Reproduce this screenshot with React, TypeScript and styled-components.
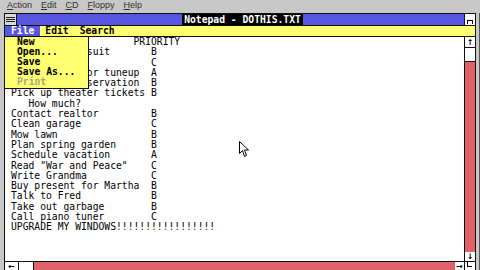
import styled, { createGlobalStyle } from 'styled-components'

const GlobalStyle = createGlobalStyle`
  html, body {
    margin: 0;
    padding: 0;
    background: #c8c8c8;
  }
`

const COLORS = {
  desk: '#c8c8c8',
  blue: '#5656e2',
  yellow: '#ffff72',
  red: '#e0616a',
  ink: '#101010',
}

const MONO = `'DejaVu Sans Mono', 'Liberation Mono', monospace`

const Screen = styled.div`
  position: relative;
  width: 480px;
  height: 270px;
  overflow: hidden;
  display: flex;
  flex-direction: column;
  background: ${COLORS.desk};
`

const DeskMenu = styled.div`
  display: flex;
  height: 13px;
  padding-left: 7px;
  gap: 9px;
  align-items: flex-start;
  font-family: 'Liberation Sans', Arial, sans-serif;
  font-size: 9px;
  line-height: 10px;
  color: #333;
`

const DeskItem = styled.span`
  & u {
    text-decoration: underline;
  }
`

const Frame = styled.div`
  flex: 1;
  display: flex;
  min-height: 0;
`

const Window = styled.div`
  position: relative;
  margin-left: 4px;
  width: 472px;
  display: flex;
  flex-direction: column;
  border-left: 1px solid ${COLORS.ink};
  border-top: 1px solid ${COLORS.ink};
  border-right: 1px solid ${COLORS.ink};
  background: #fff;
`

const RightEdge = styled.div`
  width: 3px;
  border-right: 1px solid #555;
`

const TitleBar = styled.div`
  height: 11px;
  display: flex;
  align-items: stretch;
  background: ${COLORS.blue};
  border-bottom: 1px solid ${COLORS.ink};
`

const SysBox = styled.div`
  width: 9px;
  background: #d8d8d8;
  border-right: 1px solid ${COLORS.ink};
  display: flex;
  flex-direction: column;
  justify-content: center;
  gap: 1px;
  padding: 0 1px;

  & span {
    height: 1px;
    background: #222;
  }
`

const TitleArea = styled.div`
  flex: 1;
  display: flex;
  justify-content: center;
  padding-left: 4px;
`

const TitleText = styled.div`
  background: #000;
  color: #fff;
  font-family: ${MONO};
  font-weight: bold;
  font-size: 9.7px;
  line-height: 11px;
  padding: 0 2px;
  white-space: pre;
`

const MaxBox = styled.div`
  width: 10px;
  background: #fff;
  border-left: 1px solid ${COLORS.ink};
  position: relative;

  &::after {
    content: '';
    position: absolute;
    left: 2px;
    bottom: 1px;
    width: 4px;
    height: 3px;
    border: 1px solid #000;
    border-bottom: none;
  }
`

const MenuBar = styled.div`
  position: relative;
  height: 10px;
  display: flex;
  align-items: stretch;
  background: ${COLORS.yellow};
  border-bottom: 1px solid ${COLORS.ink};
  font-family: ${MONO};
  font-size: 9.7px;
  line-height: 10px;
  z-index: 2;
`

const MenuItem = styled.div<{ $active?: boolean }>`
  padding: 0 6px;
  margin-right: -1px;
  background: ${(p) => (p.$active ? COLORS.blue : 'transparent')};
  color: ${(p) => (p.$active ? '#fff' : '#000')};
  font-weight: bold;
`

// the open File menu lies over the first lines of the document
const Dropdown = styled.div`
  position: absolute;
  left: 0;
  top: 11px;
  width: 83px;
  padding: 0 0 1px;
  background: ${COLORS.yellow};
  border-right: 1px solid ${COLORS.ink};
  border-bottom: 1px solid ${COLORS.ink};
`

const DropItem = styled.div<{ $disabled?: boolean }>`
  padding-left: 12px;
  height: 10px;
  line-height: 10px;
  font-weight: bold;
  white-space: pre;
  color: ${(p) => (p.$disabled ? '#a8a880' : '#000')};
`

const Body = styled.div`
  flex: 1;
  display: flex;
  min-height: 0;
`

const TextArea = styled.div`
  flex: 1;
  padding: 0 0 0 6px;
  font-family: ${MONO};
  font-size: 9.7px;
  line-height: 10.3px;
  color: #000;
  white-space: pre;
  overflow: hidden;
`

const VScroll = styled.div`
  width: 10px;
  display: flex;
  flex-direction: column;
  border-left: 1px solid ${COLORS.ink};
  background: ${COLORS.red};
`

const ArrowBox = styled.div<{ $w?: number; $h?: number }>`
  flex: none;
  width: ${(p) => (p.$w ? `${p.$w}px` : 'auto')};
  height: ${(p) => (p.$h ? `${p.$h}px` : 'auto')};
  background: #fff;
  display: flex;
  align-items: center;
  justify-content: center;
  font-family: 'DejaVu Sans', sans-serif;
  font-size: 8px;
  font-weight: bold;
  color: #000;
`

const Thumb = styled.div<{ $size: number; $vertical?: boolean }>`
  flex: none;
  background: #fff;
  ${(p) => (p.$vertical ? `height: ${p.$size}px;` : `width: ${p.$size}px;`)}
  border-${(p) => (p.$vertical ? 'top' : 'left')}: 1px solid ${COLORS.ink};
  border-${(p) => (p.$vertical ? 'bottom' : 'right')}: 1px solid ${COLORS.ink};
`

const Track = styled.div`
  flex: 1;
  background: ${COLORS.red};
`

const HScroll = styled.div`
  height: 8px;
  display: flex;
  border-top: 1px solid ${COLORS.ink};
`

const Corner = styled.div`
  width: 10px;
  background: #fff;
  border-left: 1px solid ${COLORS.ink};
  position: relative;

  &::after {
    content: '';
    position: absolute;
    left: 2px;
    top: 0;
    width: 4px;
    height: 4px;
    border-left: 1px solid #000;
    border-bottom: 1px solid #000;
  }
`

const Cursor = styled.svg`
  position: absolute;
  left: 239px;
  top: 141px;
`

// columns hidden under the open menu are left blank
const lines = [
  '                     PRIORITY',
  '             suit       B',
  '                        C',
  '             or tuneup  A',
  '             servation  B',
  'Pick up theater tickets B',
  '   How much?',
  'Contact realtor         B',
  'Clean garage            C',
  'Mow lawn                B',
  'Plan spring garden      B',
  'Schedule vacation       A',
  'Read "War and Peace"    C',
  'Write Grandma           C',
  'Buy present for Martha  B',
  'Talk to Fred            B',
  'Take out garbage        B',
  'Call piano tuner        C',
  'UPGRADE MY WINDOWS!!!!!!!!!!!!!!!!!',
]

const App = () => {
  return (
    <Screen>
      <GlobalStyle />
      <DeskMenu>
        <DeskItem><u>A</u>ction</DeskItem>
        <DeskItem><u>E</u>dit</DeskItem>
        <DeskItem><u>C</u>D</DeskItem>
        <DeskItem><u>F</u>loppy</DeskItem>
        <DeskItem><u>H</u>elp</DeskItem>
      </DeskMenu>
      <Frame>
        <Window>
          <TitleBar>
            <SysBox>
              <span />
              <span />
              <span />
            </SysBox>
            <TitleArea>
              <TitleText>Notepad - DOTHIS.TXT</TitleText>
            </TitleArea>
            <MaxBox />
          </TitleBar>
          <MenuBar>
            <MenuItem $active>File</MenuItem>
            <MenuItem>Edit</MenuItem>
            <MenuItem>Search</MenuItem>
            <Dropdown>
              <DropItem>New</DropItem>
              <DropItem>Open...</DropItem>
              <DropItem>Save</DropItem>
              <DropItem>Save As...</DropItem>
              <DropItem $disabled>Print</DropItem>
            </Dropdown>
          </MenuBar>
          <Body>
            <TextArea>{lines.join('\n')}</TextArea>
            <VScroll>
              <ArrowBox $h={10}>↑</ArrowBox>
              <Thumb $vertical $size={13} />
              <Track />
              <ArrowBox $h={9}>↓</ArrowBox>
            </VScroll>
          </Body>
          <HScroll>
            <ArrowBox $w={13}>←</ArrowBox>
            <Thumb $size={14} />
            <Track />
            <ArrowBox $w={9}>→</ArrowBox>
            <Corner />
          </HScroll>
        </Window>
        <RightEdge />
      </Frame>
      <Cursor width="10" height="17" viewBox="0 0 10 17">
        <path
          d="M0.5 0.5 L0.5 12.5 L3.5 9.5 L5.5 15.5 L7.5 14.5 L5.5 9 L9.5 9 Z"
          fill="#fff"
          stroke="#000"
          strokeWidth="1"
        />
      </Cursor>
    </Screen>
  )
}

export default App
